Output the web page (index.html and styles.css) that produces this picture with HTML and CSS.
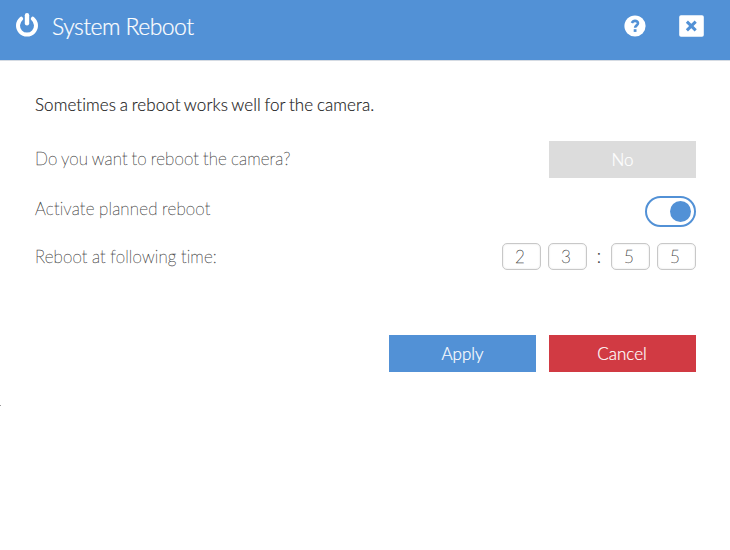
FILE: index.html
```html
<!DOCTYPE html>
<html lang="en">
<head>
<meta charset="utf-8">
<title>System Reboot</title>
<link rel="stylesheet" href="styles.css">
</head>
<body>
<header class="header">
  <svg class="power" viewBox="0 0 24 26" fill="none" stroke="#fff" stroke-linecap="round"><path d="M6.2 6.7A9 9 0 1 0 17.8 6.7" stroke-width="4"/><path d="M12 3.2V11.2" stroke-width="4.4"/></svg>
  <h1 class="title">System Reboot</h1>
  <svg class="help" viewBox="0 0 22 22"><circle cx="11" cy="11" r="10.6" fill="#fff"/><path d="M7.9 8.1C8.6 6.5 9.6 5.9 11 5.9c1.8 0 3 1 3 2.4 0 2-2.9 2.2-2.9 4.5" fill="none" stroke="#5291d6" stroke-width="2.6"/><rect x="9.7" y="14.2" width="2.8" height="2.7" fill="#5291d6"/></svg>
  <svg class="close" viewBox="0 0 25 22"><rect x=".2" y=".2" width="24.6" height="21.6" rx="1.8" fill="#fff"/><path d="M7.9 6.6L16.7 15.4M16.7 6.6L7.9 15.4" stroke="#5291d6" stroke-width="3"/></svg>
</header>
<main class="content">
  <p class="intro">Sometimes a reboot works well for the camera.</p>
  <div class="row row-ask"><span class="label label-ask">Do you want to reboot the camera?</span><button class="btn btn-no">No</button></div>
  <div class="row row-plan"><span class="label label-plan">Activate planned reboot</span><span class="toggle"><i class="knob"></i></span></div>
  <div class="row row-time"><span class="label label-time">Reboot at following time:</span>
    <div class="time"><span class="digit">2</span><span class="digit">3</span><span class="colon">:</span><span class="digit">5</span><span class="digit">5</span></div>
  </div>
  <div class="actions"><button class="btn btn-apply">Apply</button><button class="btn btn-cancel">Cancel</button></div>
</main>
<i class="speck"></i>
</body>
</html>
```
FILE: styles.css
```css
* { box-sizing: border-box; }
body { margin: 0; height: 550px; overflow: hidden; background: #fff; font-family: Lato, "Liberation Sans", sans-serif; font-variant-ligatures: none; color: #333; position: relative; }
.header { display: flex; align-items: flex-start; height: 61px; padding: 0 26px 0 15px; background: #5291d6; border-bottom: 1px solid #d5dbe3; }
.power { width: 24px; height: 26px; margin-top: 12px; }
.title { flex: 1; margin: 0 0 0 13px; font-size: 23px; font-weight: 300; line-height: 52px; letter-spacing: -.55px; color: #fff; white-space: nowrap; -webkit-text-stroke: .2px; }
.help { width: 22px; height: 22px; margin: 15px 33px 0 0; }
.close { width: 25px; height: 22px; margin-top: 15px; }
.content { padding: 31px 34px 0 35px; }
.intro { margin: 0; font-size: 17px; font-weight: 300; line-height: 25px; padding-bottom: 1px; letter-spacing: .07px; word-spacing: -1px; white-space: nowrap; color: #222; -webkit-text-stroke: .15px; }
.row { display: flex; justify-content: space-between; align-items: flex-start; }
.row-ask { margin-top: 23px; height: 55px; }
.row-plan { height: 47px; }
.row-time { height: 49px; }
.label { font-size: 17px; font-weight: 100; line-height: 36px; color: #444; white-space: nowrap; -webkit-text-stroke: .3px; }
.label-ask { letter-spacing: .13px; word-spacing: -1px; }
.label-plan { line-height: 26px; letter-spacing: .18px; word-spacing: -.6px; }
.label-time { line-height: 27px; letter-spacing: .15px; word-spacing: -.6px; }
.btn { width: 147px; height: 37px; padding: 0 0 1px; border: 0; color: #fff; font-family: inherit; font-size: 17px; font-weight: 300; font-variant-ligatures: none; -webkit-text-stroke: .2px; }
.btn-no { background: #dcdcdc; }
.btn-apply { background: #5291d6; }
.btn-cancel { background: #d13a43; padding-right: 1px; }
.toggle { display: flex; justify-content: flex-end; align-items: center; width: 51px; height: 31px; padding-right: 3px; border: 2px solid #5291d6; border-radius: 16px; }
.knob { width: 21px; height: 21px; border-radius: 50%; background: #5291d6; }
.time { display: flex; align-items: center; gap: 7px; }
.digit { width: 39px; height: 27px; padding-right: 3px; border: 1px solid #c8c8c8; border-radius: 5px; box-shadow: inset 0 0 2px #ddd; font-size: 17px; font-weight: 100; line-height: 25px; text-align: center; color: #444; -webkit-text-stroke: .3px; }
.colon { width: 10px; text-align: center; font-size: 20px; font-weight: 300; line-height: 20px; padding-bottom: 4px; color: #444; }
.actions { display: flex; justify-content: flex-end; gap: 13px; margin-top: 43px; }
.speck { position: absolute; left: 0; top: 405px; width: 1px; height: 1px; background: #999; }
```
